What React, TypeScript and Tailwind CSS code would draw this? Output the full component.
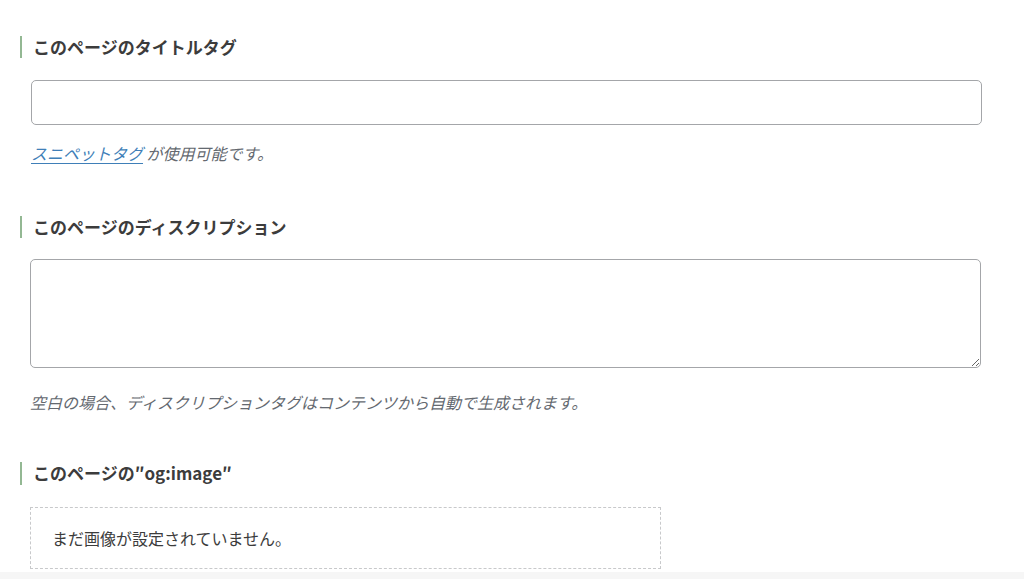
import React from 'react';

const jp = { fontFamily: '"Noto Sans CJK JP", "Noto Sans", sans-serif' };

const SectionHeading = ({ children, className = '' }: { children: React.ReactNode; className?: string }) => (
  <h3 className={`border-l-[2px] border-[#93b893] pl-[11px] h-[22px] leading-[22px] text-[17px] font-bold text-[#3c3c3c] ${className}`}>
    {children}
  </h3>
);

export default function App() {
  return (
    <div className="w-[1024px] h-[579px] bg-white overflow-hidden flex flex-col" style={jp}>
      <div className="flex-1 px-[20px] pt-[36px]">
        {/* タイトルタグ */}
        <SectionHeading>このページのタイトルタグ</SectionHeading>
        <input
          type="text"
          className="block mt-[22px] ml-[11px] w-[951px] h-[45px] rounded-[5px] border border-[#a4a6a9] bg-white px-3 outline-none"
        />
        <p className="mt-[17px] ml-[11px] text-[16px] leading-[22px] italic text-[#646970]">
          <a href="#" className="text-[#3f7fb8] underline underline-offset-[3px]">スニペットタグ</a> が使用可能です。
        </p>

        {/* ディスクリプション */}
        <SectionHeading className="mt-[52px]">このページのディスクリプション</SectionHeading>
        <textarea
          className="block mt-[21px] ml-[10px] w-[951px] h-[109px] rounded-[5px] border border-[#a4a6a9] bg-white px-3 py-2 outline-none"
        />
        <p className="mt-[23px] ml-[10px] text-[16px] leading-[22px] italic text-[#646970]">
          空白の場合、ディスクリプションタグはコンテンツから自動で生成されます。
        </p>

        {/* og:image */}
        <SectionHeading className="mt-[49px] h-[23px]">このページの″og:image″</SectionHeading>
        <div className="mt-[22px] ml-[10px] w-[631px] h-[62px] border border-dashed border-[#c8c9cb] flex items-center pl-[21px]">
          <span className="text-[16px] text-[#3c3c3c]">まだ画像が設定されていません。</span>
        </div>
      </div>
      <div className="h-[7px] bg-[#f6f6f6]" />
    </div>
  );
}
